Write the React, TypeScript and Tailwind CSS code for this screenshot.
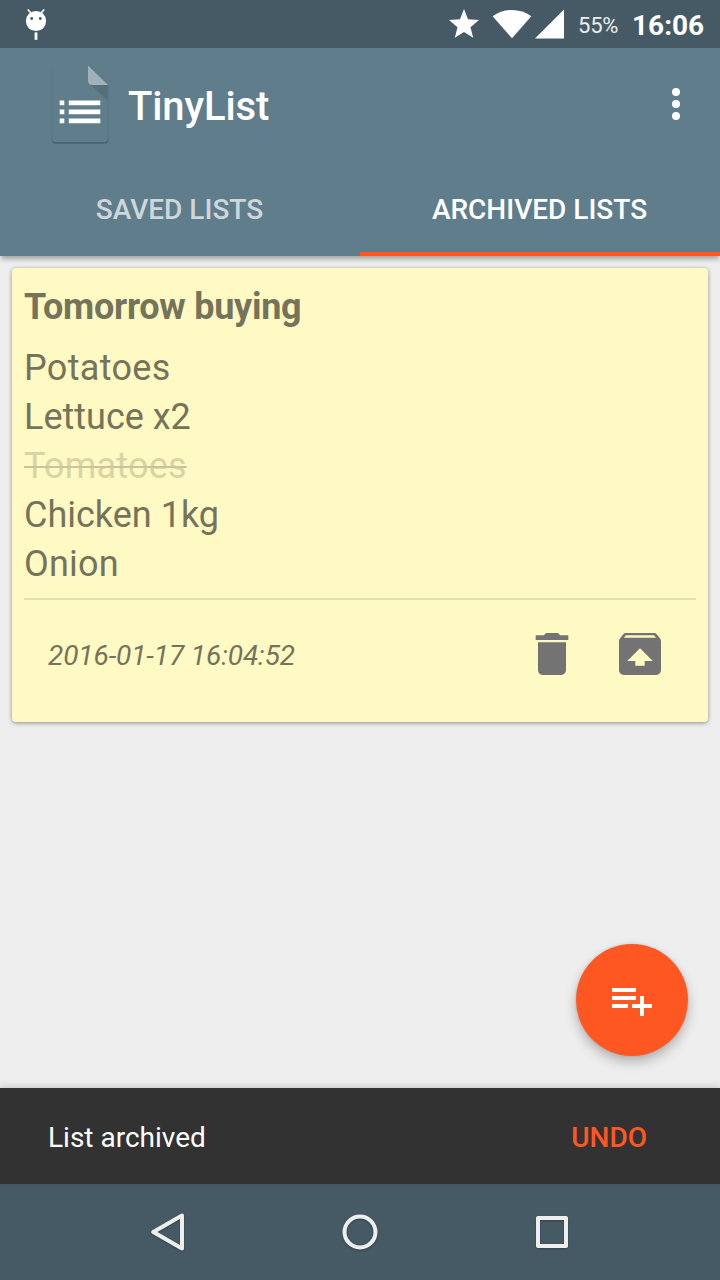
import React from "react";

type Item = { text: string; className: string };

const items: Item[] = [
  { text: "Potatoes", className: "tracking-[0.32px]" },
  { text: "Lettuce x2", className: "" },
  {
    text: "Tomatoes",
    className: "tracking-[0.22px] text-[#d9d4a5] line-through decoration-[#c9c499] decoration-2",
  },
  { text: "Chicken 1kg", className: "" },
  { text: "Onion", className: "tracking-[0.2px]" },
];

function StatusBar() {
  return (
    <div className="flex h-12 shrink-0 items-start bg-[#455a64] text-white">
      <svg className="ml-6 mt-1.5" width="24" height="36" viewBox="0 0 24 36" fill="currentColor">
        <path d="M4.2 4 7 7M19.8 4 17 7" stroke="currentColor" strokeWidth="1.7" strokeLinecap="round" />
        <circle cx="12" cy="15" r="10.1" />
        <circle cx="7.7" cy="12.5" r="1.4" fill="#455a64" />
        <circle cx="16.3" cy="12.5" r="1.4" fill="#455a64" />
        <path d="M10.6 26.4h2.8v7.4h-2.8z" />
      </svg>
      <svg className="ml-auto" width="124" height="48" viewBox="444 0 124 48" fill="currentColor">
        <path d="m464 9 4 10.3 11 .8-8.5 7.1 2.7 10.5-9.2-5.8-9.2 5.8 2.7-10.5-8.5-7.1 11-.8z" />
        <path d="M492.6 16.3C503.8 7.9 520 7.9 531.3 16.3L512 38.3z" />
        <path d="M564 9.5V38.5H535z" />
      </svg>
      <span className="ml-[10px] mt-[10px] w-10 whitespace-nowrap text-[22px] leading-8 tracking-[-0.2px] text-white/90">55%</span>
      <span className="ml-[14px] mt-[10px] w-[88px] whitespace-nowrap text-[28px] font-bold leading-8">16:06</span>
    </div>
  );
}

function Logo() {
  return (
    <svg className="ml-12 mt-3" width="64" height="88" viewBox="48 60 64 88">
      <path d="M55 67H88V80q0 5 5 5H108.600V139.500q0 4-4 4H55.500q-4 0-4-4V71q0-4 3.500-4z" fill="#506b78" opacity=".6" />
      <path d="M52.300 139.500q.5 3.500 4.200 3.500h47q3.700 0 4.200-3.500" fill="none" stroke="#486370" strokeWidth="1.800" opacity=".8" />
      <path d="M56 66H88V80.500q0 4.500 4.500 4.500H107.700V138q0 4-4 4H56q-4 0-4-4V70q0-4 4-4z" fill="#607d8b" />
      <path d="M91 85H107.700V101z" fill="#566f7b" />
      <path d="M88 65.500 108 85H92.500Q88 85 88 80.500z" fill="#9fb1b9" />
      <path
        d="M59.700 100.600h4.600v4.600H59.700zM68.800 100.600h31.500v4.600H68.800zM59.700 109.600h4.600v4.600H59.700zM68.800 109.600h31.500v4.600H68.800zM59.700 118.600h4.600v4.600H59.700zM68.800 118.600h31.500v4.600H68.800z"
        fill="#fff"
      />
    </svg>
  );
}

function AppBar() {
  return (
    <header className="relative z-10 flex h-52 shrink-0 flex-col bg-[#607d8b] text-white shadow-[0_4px_5px_-1px_rgba(0,0,0,0.32)]">
      <div className="flex h-28 items-start">
        <Logo />
        <h1 className="ml-4 mt-[35px] text-[40px] font-medium leading-[48px] tracking-[-0.1px]">TinyList</h1>
        <svg className="ml-auto mr-5 mt-8" width="48" height="48" viewBox="0 0 24 24" fill="currentColor">
          <circle cx="12" cy="6" r="2" />
          <circle cx="12" cy="12" r="2" />
          <circle cx="12" cy="18" r="2" />
        </svg>
      </div>
      <nav className="grid h-24 grid-cols-2 text-center text-[28px] font-medium">
        <button className="pr-px pt-1 text-white/70">SAVED LISTS</button>
        <button className="border-b-4 border-[#ff5722] pr-px pt-2">ARCHIVED LISTS</button>
      </nav>
    </header>
  );
}

function ListCard() {
  return (
    <article className="mx-3 mt-3 flex h-[454px] flex-col rounded-[4px] bg-[#fff9c4] px-3 text-[#757359] shadow-[0_1px_4px_rgba(0,0,0,0.42)]">
      <h2 className="mt-[18px] text-[36px] font-bold leading-[42px] tracking-[-0.27px]">Tomorrow buying</h2>
      <ul className="mt-4 text-[36px] leading-[49px]">
        {items.map((item) => (
          <li key={item.text}>
            <span className={item.className}>{item.text}</span>
          </li>
        ))}
      </ul>
      <div className="mt-[9px] h-0.5 bg-[#e5e0b0]" />
      <div className="flex h-[108px] items-center pl-6 pr-7">
        <time className="mr-auto pt-[3px] text-[28px] italic leading-8 tracking-[-0.1px]">2016-01-17 16:04:52</time>
        <svg className="mr-8" width="56" height="56" viewBox="0 0 24 24" fill="#737373">
          <path d="M6 19c0 1.100.9 2 2 2h8c1.100 0 2-.9 2-2V7H6v12zM19 4h-3.500l-1-1h-5l-1 1H5v2h14V4z" />
        </svg>
        <svg width="56" height="56" viewBox="0 0 24 24" fill="#737373">
          <path d="M20.550 5.220l-1.390-1.680C18.880 3.210 18.470 3 18 3H6c-.47 0-.88.21-1.150.55L3.460 5.220C3.170 5.570 3 6.010 3 6.500V19c0 1.100.89 2 2 2h14c1.100 0 2-.9 2-2V6.500c0-.49-.17-.93-.45-1.280zM12 9.500l5.500 5.500H14v2h-4v-2H6.500L12 9.500zM5.120 5l.82-1h12l.93 1H5.120z" />
        </svg>
      </div>
    </article>
  );
}

function NavBar() {
  return (
    <nav className="flex h-24 shrink-0 items-center justify-between bg-[#455a64] px-[144px]">
      <svg className="drop-shadow-[0_1px_1px_rgba(0,0,0,0.25)]" width="48" height="48" viewBox="0 0 48 48" fill="none" stroke="#eee" strokeWidth="4" strokeLinejoin="round">
        <path d="M38 7.500V40.500L9.300 24z" />
      </svg>
      <svg className="drop-shadow-[0_1px_1px_rgba(0,0,0,0.25)]" width="48" height="48" viewBox="0 0 48 48" fill="none" stroke="#eee" strokeWidth="4">
        <circle cx="24" cy="24" r="15.500" />
      </svg>
      <svg className="drop-shadow-[0_1px_1px_rgba(0,0,0,0.25)]" width="48" height="48" viewBox="0 0 48 48" fill="none" stroke="#eee" strokeWidth="4" strokeLinejoin="round">
        <path d="M10 10h28v28H10z" />
      </svg>
    </nav>
  );
}

export default function App() {
  return (
    <div className="flex h-[1280px] w-[720px] flex-col overflow-hidden bg-[#eeeeee] font-['Roboto',sans-serif]">
      <StatusBar />
      <AppBar />
      <main className="relative flex-1">
        <div className="flex flex-col">
          <ListCard />
        </div>
        <button className="absolute bottom-8 right-8 flex size-28 items-center justify-center rounded-full bg-[#ff5722] shadow-[0_6px_12px_rgba(0,0,0,0.25),0_0_3px_rgba(0,0,0,0.12)]">
          <svg width="48" height="48" viewBox="0 0 24 24" fill="#fff">
            <path d="M14 10H2v2h12v-2zm0-4H2v2h12V6zm4 8v-4h-2v4h-4v2h4v4h2v-4h4v-2h-4zM2 16h8v-2H2v2z" />
          </svg>
        </button>
      </main>
      <div className="relative flex h-24 shrink-0 items-center justify-between bg-[#323232] pl-12 pr-[73px] pt-1 text-[28px] shadow-[0_-2px_6px_rgba(0,0,0,0.15)]">
        <span className="text-white">List archived</span>
        <button className="font-medium text-[#ff5722]">UNDO</button>
      </div>
      <NavBar />
    </div>
  );
}
